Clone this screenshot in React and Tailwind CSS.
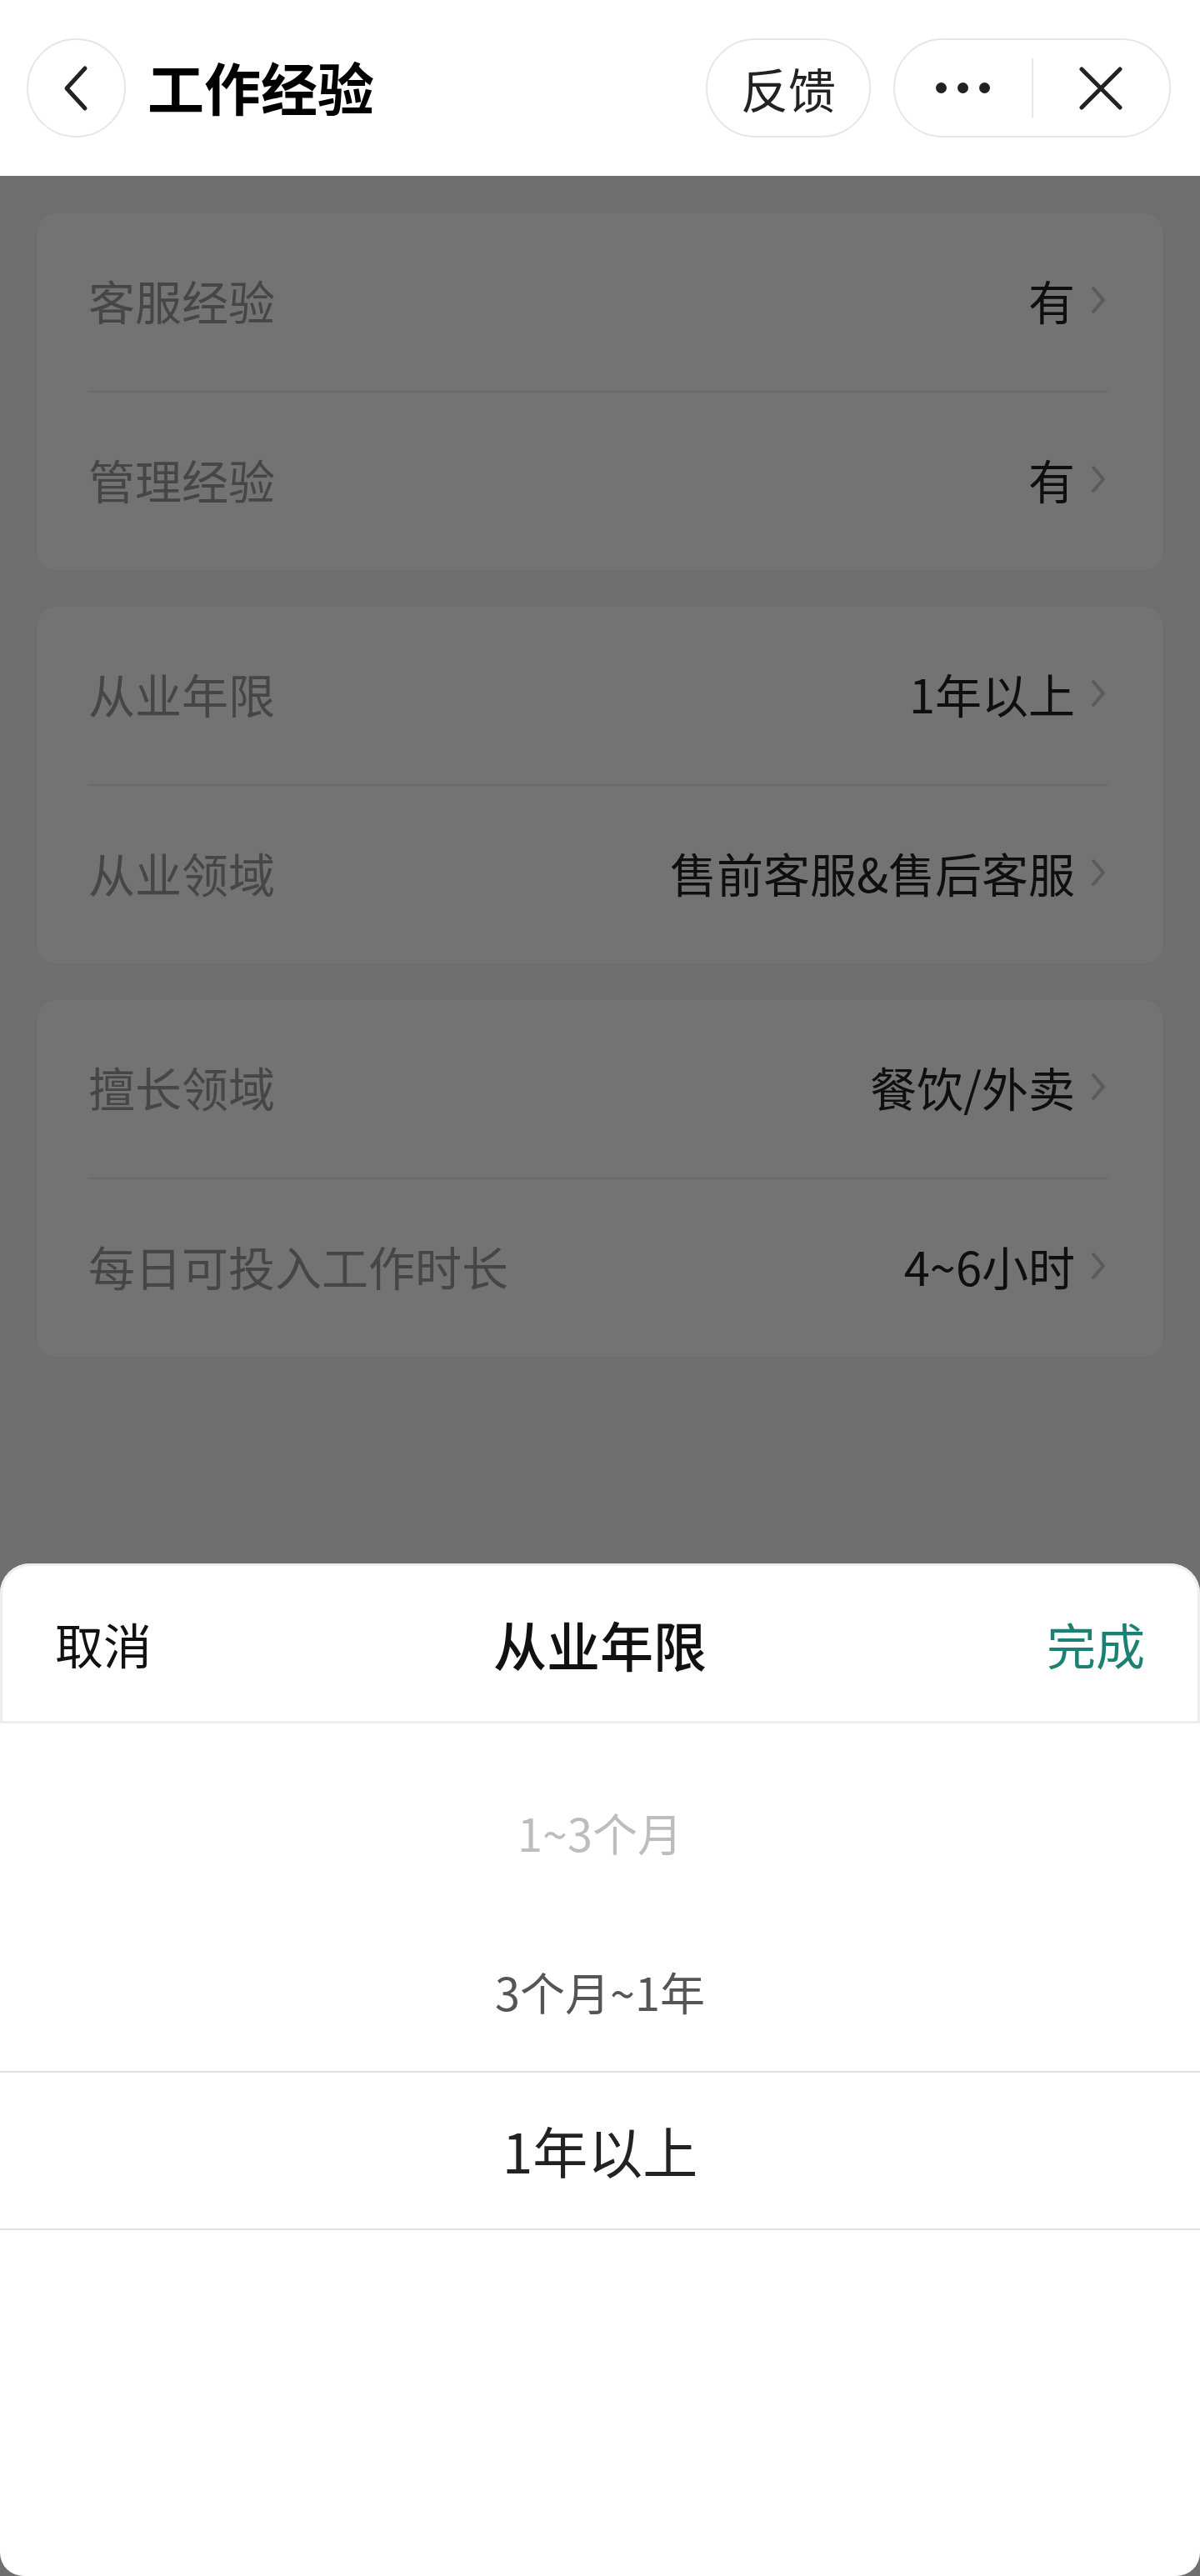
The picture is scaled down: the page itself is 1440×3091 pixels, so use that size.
import React from 'react'

const groups = [
  [
    { label: '客服经验', value: '有' },
    { label: '管理经验', value: '有' },
  ],
  [
    { label: '从业年限', value: '1年以上' },
    { label: '从业领域', value: '售前客服&售后客服' },
  ],
  [
    { label: '擅长领域', value: '餐饮/外卖' },
    { label: '每日可投入工作时长', value: '4~6小时' },
  ],
]

function Chevron() {
  return (
    <svg width="24" height="36" viewBox="0 0 24 36" fill="none">
      <path d="M6 4 L18 18 L6 32" stroke="#c9c9c9" strokeWidth="4" strokeLinecap="round" strokeLinejoin="round" />
    </svg>
  )
}

function Row({ label, value }) {
  return (
    <div className="flex h-[213px] items-center justify-between pb-[6px]">
      <span className="text-[56px] text-[#9c9c9c]">{label}</span>
      <span className="flex items-center gap-[16px]">
        <span className="text-[56px] text-[#222]">{value}</span>
        <Chevron />
      </span>
    </div>
  )
}

export default function App() {
  return (
    <div className="flex h-[3091px] w-[1440px] flex-col bg-[#f7f7f7] font-['Noto_Sans_CJK_SC',sans-serif] leading-none">
      {/* top bar */}
      <header className="flex h-[211px] shrink-0 items-center bg-white pl-[32px] pr-[35px]">
        <div className="flex h-[119px] w-[119px] items-center justify-center rounded-full border-2 border-[#e6e6e6]">
          <svg width="40" height="60" viewBox="0 0 40 60" fill="none">
            <path d="M30 6 L8 30 L30 54" stroke="#222" strokeWidth="5" strokeLinecap="round" strokeLinejoin="round" />
          </svg>
        </div>
        <h1 className="ml-[26px] pb-[4px] text-[68px] font-semibold text-black">工作经验</h1>
        <div className="ml-auto flex h-[119px] w-[198px] items-center justify-center rounded-full border-2 border-[#e6e6e6] text-[57px] text-[#222]">
          反馈
        </div>
        <div className="ml-[27px] flex h-[119px] w-[333px] items-center rounded-full border-2 border-[#e6e6e6]">
          <div className="flex flex-1 items-center justify-center gap-[13px]">
            <span className="h-[13px] w-[13px] rounded-full bg-[#222]" />
            <span className="h-[13px] w-[13px] rounded-full bg-[#222]" />
            <span className="h-[13px] w-[13px] rounded-full bg-[#222]" />
          </div>
          <div className="h-[71px] w-[2px] bg-[#e6e6e6]" />
          <div className="flex flex-1 items-center justify-center">
            <svg width="52" height="52" viewBox="0 0 52 52" fill="none">
              <path d="M3 3 L49 49 M49 3 L3 49" stroke="#222" strokeWidth="5" strokeLinecap="round" />
            </svg>
          </div>
        </div>
      </header>

      {/* page body under the mask */}
      <main className="relative flex-1">
        <div className="flex flex-col gap-[44px] px-[44px] pt-[45px]">
          {groups.map((rows, i) => (
            <div key={i} className="rounded-[24px] bg-white pl-[62px] pr-[66px] shadow-[0_0_8px_rgba(0,0,0,0.05)]">
              <Row {...rows[0]} />
              <div className="h-[2px] bg-[#ebebeb]" />
              <Row {...rows[1]} />
            </div>
          ))}
        </div>

        <div className="absolute inset-0 bg-black/[0.55]" />

        {/* bottom picker sheet */}
        <div className="absolute inset-x-0 bottom-0 flex h-[1215px] flex-col rounded-t-[36px] rounded-b-[28px] bg-white">
          <div className="flex h-[192px] items-center justify-between rounded-t-[36px] border-[3px] border-[#eeeeee] px-[63px]">
            <span className="w-[160px] text-[58px] text-[#111]">取消</span>
            <span className="text-[64px] font-medium text-[#111]">从业年限</span>
            <span className="w-[160px] text-right text-[59px] text-[#1b8173]">完成</span>
          </div>
          <div className="flex flex-col pt-[35px]">
            <div className="flex h-[191px] items-center justify-center text-[54px] text-[#bdbdbd]">1~3个月</div>
            <div className="flex h-[191px] items-center justify-center text-[54px] text-[#555]">3个月~1年</div>
            <div className="flex h-[191px] items-center justify-center border-y-2 border-[#e2e2e2] pb-[4px] text-[66px] text-[#222]">
              1年以上
            </div>
          </div>
        </div>
      </main>
    </div>
  )
}
